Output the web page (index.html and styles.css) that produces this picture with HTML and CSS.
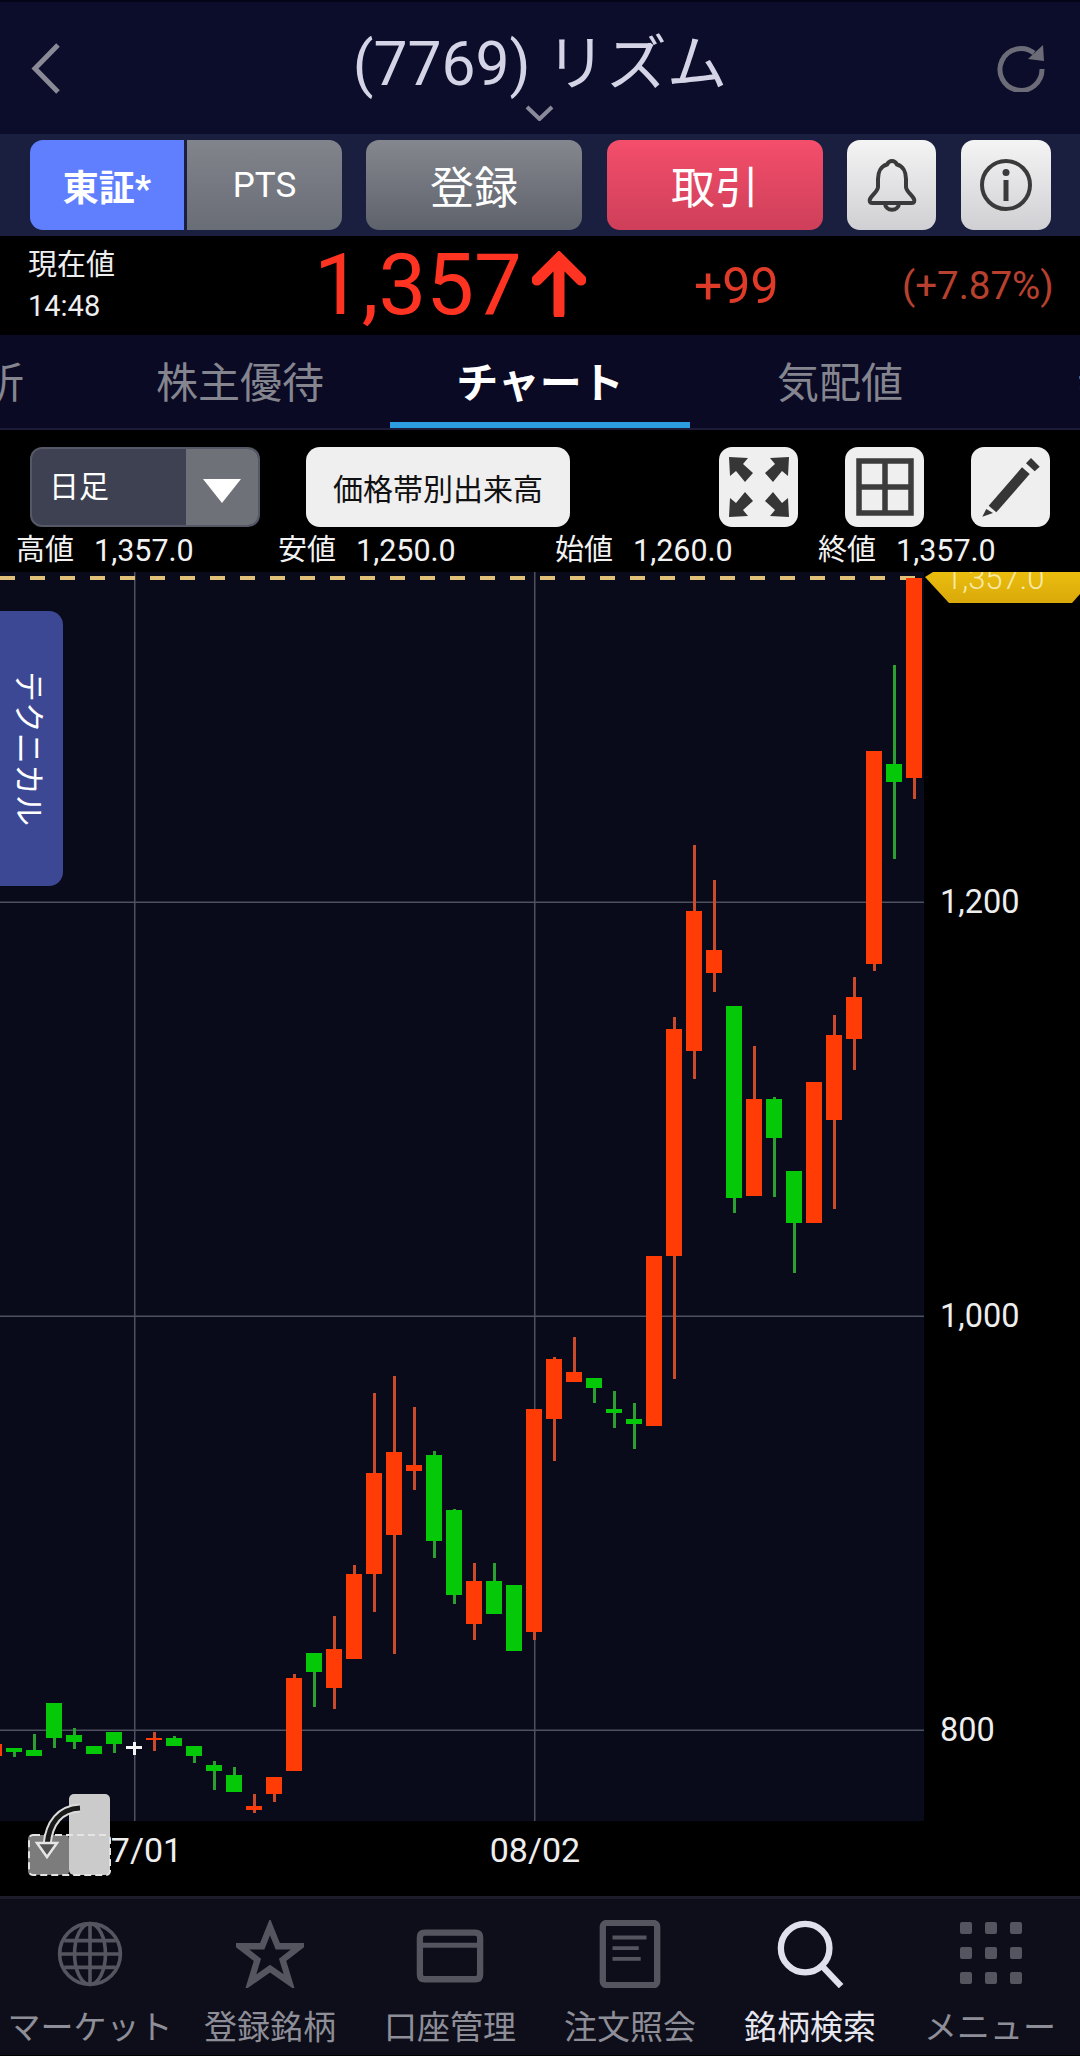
FILE: index.html
```html
<!DOCTYPE html>
<html lang="ja">
<head>
    <meta charset="UTF-8">
    <title>(7769) リズム</title>
    <link rel="stylesheet" href="styles.css">
</head>
<body>
    <header class="header">
        <svg class="back" viewBox="0 0 31 51"><path d="M27 2 L4 25.500 L27 49"/></svg>
        <h1 class="title">(7769) リズム</h1>
        <svg class="reload" viewBox="0 0 50 48"><path class="arc" d="M38 9 A21 21 0 1 0 46 25"/><path class="head" d="M47 1 L48 17 L32 15 Z"/></svg>
        <svg class="more" viewBox="0 0 29 16"><path d="M2 2 L14.500 14 L27 2"/></svg>
    </header>

    <div class="actions">
        <div class="market">
            <button class="market-on">東証*</button>
            <button class="market-off">PTS</button>
        </div>
        <button class="btn-wide btn-grey">登録</button>
        <button class="btn-wide btn-red">取引</button>
        <button class="btn-icon">
            <svg viewBox="0 0 54 56"><path class="line" d="M27 4 C30 4 31 5.500 32 7.500 C38 9 41 15 41 22 L41 30 C41 34 47 38 49 42 C50 44 49 46 47 46 L7 46 C5 46 4 44 5 42 C7 38 13 34 13 30 L13 22 C13 15 16 9 22 7.500 C23 5.500 24 4 27 4 Z"/><path class="line" d="M20 46 C20 55 34 55 34 46"/></svg>
        </button>
        <button class="btn-icon btn-last">
            <svg viewBox="0 0 54 56"><circle class="line" cx="27" cy="28" r="24"/><circle class="dot" cx="27" cy="15.500" r="3.500"/><rect class="dot" x="24.500" y="23" width="5" height="21"/></svg>
        </button>
    </div>

    <div class="quote">
        <div class="quote-label">
            <span>現在値</span>
            <span>14:48</span>
        </div>
        <div class="quote-price">
            <span>1,357</span>
            <svg viewBox="0 0 54 66"><path d="M27 7 L27 63 M5 29 L27 7 L49 29"/></svg>
        </div>
        <div class="quote-diff">+99</div>
        <div class="quote-rate">(+7.87%)</div>
    </div>

    <nav class="tabs">
        <a class="tab">企業分析</a>
        <a class="tab">株主優待</a>
        <a class="tab tab-on">チャート</a>
        <a class="tab">気配値</a>
        <a class="tab">歩み値</a>
    </nav>

    <div class="controls">
        <div class="select">
            <span class="select-text">日足</span>
            <span class="select-arrow"></span>
        </div>
        <button class="btn-volume">価格帯別出来高</button>
        <div class="tools">
            <button class="tool">
                <svg viewBox="0 0 60 60"><path d="M0 0 L19 1 L14 7 L24 16 L16 25 L7 14 L1 19 Z"/><path d="M60 0 L41 1 L46 7 L36 16 L44 25 L53 14 L59 19 Z"/><path d="M0 60 L19 59 L14 53 L24 44 L16 35 L7 46 L1 41 Z"/><path d="M60 60 L41 59 L46 53 L36 44 L44 35 L53 46 L59 41 Z"/></svg>
            </button>
            <button class="tool">
                <svg viewBox="0 0 60 60"><path class="panes" d="M4 4 H56 V56 H4 Z M30 4 V56 M4 30 H56"/></svg>
            </button>
            <button class="tool">
                <svg viewBox="0 0 60 60"><path d="M7.700 48.700 L15.300 55.300 L48.700 17 L41 10.300 Z"/><path d="M45 6.300 L50 1 L58.700 9.700 L53.700 14.300 Z"/><path d="M5.300 52 L12 56 L1.300 59.700 Z"/></svg>
            </button>
        </div>
    </div>

    <div class="stats">
        <div class="stat"><span>高値</span><span class="stat-value">1,357.0</span></div>
        <div class="stat"><span>安値</span><span class="stat-value">1,250.0</span></div>
        <div class="stat"><span>始値</span><span class="stat-value">1,260.0</span></div>
        <div class="stat"><span>終値</span><span class="stat-value">1,357.0</span></div>
    </div>

    <main class="chart">
        <svg class="plot" viewBox="0 572 924 1249">
            <!-- grid -->
            <rect class="grid" x="134" y="572" width="1.500" height="1249"/>
            <rect class="grid" x="534" y="572" width="1.500" height="1249"/>
            <rect class="grid" x="0" y="901.500" width="924" height="1.500"/>
            <rect class="grid" x="0" y="1315.500" width="924" height="1.500"/>
            <rect class="grid" x="0" y="1729.500" width="924" height="1.500"/>
            <path class="last" d="M0 578 H915"/>

            <!-- wicks -->
            <g class="wick-green">
                <rect x="13" y="1748" width="3" height="9"/>
                <rect x="33" y="1734" width="3" height="22"/>
                <rect x="53" y="1703" width="3" height="45"/>
                <rect x="73" y="1728" width="3" height="21"/>
                <rect x="113" y="1732" width="3" height="21"/>
                <rect x="173" y="1736" width="3" height="10"/>
                <rect x="193" y="1746" width="3" height="17"/>
                <rect x="213" y="1761" width="3" height="29"/>
                <rect x="233" y="1767" width="3" height="25"/>
                <rect x="313" y="1653" width="3" height="54"/>
                <rect x="433" y="1451" width="3" height="107"/>
                <rect x="453" y="1509" width="3" height="95"/>
                <rect x="493" y="1563" width="3" height="51"/>
                <rect x="593" y="1378" width="3" height="25"/>
                <rect x="613" y="1391" width="3" height="37"/>
                <rect x="633" y="1403" width="3" height="46"/>
                <rect x="733" y="1006" width="3" height="207"/>
                <rect x="773" y="1097" width="3" height="100"/>
                <rect x="793" y="1171" width="3" height="102"/>
                <rect x="893" y="665" width="3" height="194"/>
            </g>
            <g class="wick-red">
                <rect x="153" y="1732" width="3" height="19"/>
                <rect x="253" y="1794" width="3" height="19"/>
                <rect x="273" y="1777" width="3" height="25"/>
                <rect x="293" y="1674" width="3" height="10"/>
                <rect x="333" y="1616" width="3" height="93"/>
                <rect x="353" y="1565" width="3" height="20"/>
                <rect x="373" y="1393" width="3" height="219"/>
                <rect x="393" y="1376" width="3" height="278"/>
                <rect x="413" y="1407" width="3" height="83"/>
                <rect x="473" y="1563" width="3" height="77"/>
                <rect x="533" y="1409" width="3" height="231"/>
                <rect x="553" y="1357" width="3" height="104"/>
                <rect x="573" y="1337" width="3" height="45"/>
                <rect x="673" y="1017" width="3" height="362"/>
                <rect x="693" y="845" width="3" height="234"/>
                <rect x="713" y="880" width="3" height="112"/>
                <rect x="753" y="1046" width="3" height="150"/>
                <rect x="833" y="1015" width="3" height="194"/>
                <rect x="853" y="977" width="3" height="93"/>
                <rect x="873" y="751" width="3" height="220"/>
                <rect x="913" y="578" width="3" height="221"/>
            </g>
            <g class="wick-white">
                <rect x="133" y="1742" width="3" height="13"/>
                <rect x="126" y="1746" width="16" height="3"/>
            </g>

            <!-- bodies -->
            <g class="body-green">
                <rect x="6" y="1748" width="16" height="4"/>
                <rect x="26" y="1750" width="16" height="6"/>
                <rect x="46" y="1703" width="16" height="35"/>
                <rect x="66" y="1735" width="16" height="7"/>
                <rect x="86" y="1746" width="16" height="8"/>
                <rect x="106" y="1732" width="16" height="12"/>
                <rect x="166" y="1738" width="16" height="8"/>
                <rect x="186" y="1746" width="16" height="10"/>
                <rect x="206" y="1765" width="16" height="6"/>
                <rect x="226" y="1775" width="16" height="17"/>
                <rect x="306" y="1653" width="16" height="19"/>
                <rect x="426" y="1455" width="16" height="86"/>
                <rect x="446" y="1510" width="16" height="85"/>
                <rect x="486" y="1581" width="16" height="33"/>
                <rect x="506" y="1585" width="16" height="66"/>
                <rect x="586" y="1378" width="16" height="10"/>
                <rect x="606" y="1409" width="16" height="4"/>
                <rect x="626" y="1419" width="16" height="5"/>
                <rect x="726" y="1006" width="16" height="192"/>
                <rect x="766" y="1099" width="16" height="39"/>
                <rect x="786" y="1171" width="16" height="52"/>
                <rect x="886" y="764" width="16" height="18"/>
            </g>
            <g class="body-red">
                <rect x="-14" y="1744" width="16" height="12"/>
                <rect x="146" y="1738" width="16" height="2"/>
                <rect x="246" y="1806" width="16" height="4"/>
                <rect x="266" y="1777" width="16" height="17"/>
                <rect x="286" y="1678" width="16" height="93"/>
                <rect x="326" y="1649" width="16" height="39"/>
                <rect x="346" y="1574" width="16" height="85"/>
                <rect x="366" y="1473" width="16" height="101"/>
                <rect x="386" y="1452" width="16" height="83"/>
                <rect x="406" y="1465" width="16" height="6"/>
                <rect x="466" y="1581" width="16" height="43"/>
                <rect x="526" y="1409" width="16" height="223"/>
                <rect x="546" y="1359" width="16" height="60"/>
                <rect x="566" y="1372" width="16" height="10"/>
                <rect x="646" y="1256" width="16" height="170"/>
                <rect x="666" y="1029" width="16" height="227"/>
                <rect x="686" y="911" width="16" height="140"/>
                <rect x="706" y="950" width="16" height="23"/>
                <rect x="746" y="1099" width="16" height="97"/>
                <rect x="806" y="1082" width="16" height="141"/>
                <rect x="826" y="1035" width="16" height="85"/>
                <rect x="846" y="997" width="16" height="42"/>
                <rect x="866" y="751" width="16" height="213"/>
                <rect x="906" y="578" width="16" height="200"/>
            </g>
        </svg>

        <div class="technical">テクニカル</div>
        <div class="price-tag">1,357.0</div>
        <span class="axis-price axis-1200">1,200</span>
        <span class="axis-price axis-1000">1,000</span>
        <span class="axis-price axis-800">800</span>
    </main>

    <div class="dates">
        <span class="date date-july">07/01</span>
        <span class="date date-august">08/02</span>
        <svg class="rotate" viewBox="0 0 84 84">
            <rect class="rotate-page" x="41" y="1" width="41" height="81" rx="5"/>
            <rect class="rotate-shade" x="0" y="42" width="41" height="40" rx="4"/>
            <rect class="rotate-dash" x="1" y="42" width="81" height="40" rx="4"/>
            <path class="rotate-edge" d="M52 15 C32 16 21 30 19 52"/>
            <path class="rotate-curve" d="M52 15 C32 16 21 30 19 52"/>
            <path class="rotate-head" d="M9 50 L29 50 L19 64 Z"/>
        </svg>
    </div>

    <footer class="bottom">
        <a class="bottom-item">
            <svg viewBox="0 0 66 66"><g class="nav-thin"><circle cx="33" cy="33" r="29.500"/><ellipse cx="33" cy="33" rx="15" ry="29.500"/><path d="M33 3 V63 M4 33 H62 M8 20 H58 M8 46 H58"/></g></svg>
            <span>マーケット</span>
        </a>
        <a class="bottom-item">
            <svg viewBox="0 0 70 66"><path class="nav-line" d="M35 5 L43 25 L66 25 L48 39 L55 62 L35 48 L15 62 L22 39 L4 25 L27 25 Z"/></svg>
            <span>登録銘柄</span>
        </a>
        <a class="bottom-item">
            <svg viewBox="0 0 70 66"><path class="nav-line" d="M9 11 H61 Q66 11 66 16 V54 Q66 59 61 59 H9 Q4 59 4 54 V16 Q4 11 9 11 Z"/><path class="nav-band" d="M4 24 H66"/></svg>
            <span>口座管理</span>
        </a>
        <a class="bottom-item">
            <svg viewBox="0 0 66 70"><rect class="nav-line" x="5" y="3" width="56" height="64" rx="4"/><path class="nav-text" d="M15 18 H50 M15 29 H42 M15 40 H44"/></svg>
            <span>注文照会</span>
        </a>
        <a class="bottom-item bottom-on">
            <svg viewBox="0 0 70 70"><circle class="nav-line" cx="30" cy="29" r="25"/><path class="nav-line" d="M47 47 L67 68"/></svg>
            <span>銘柄検索</span>
        </a>
        <a class="bottom-item">
            <div class="dots">
                <i></i><i></i><i></i>
                <i></i><i></i><i></i>
                <i></i><i></i><i></i>
            </div>
            <span>メニュー</span>
        </a>
    </footer>
</body>
</html>
```

FILE: styles.css
```css
* {
    box-sizing: border-box;
}

body {
    margin: 0;
    width: 1080px;
    height: 2056px;
    overflow: hidden;
    background-color: #000;
    color: #fff;
    font-family: Roboto, "Noto Sans CJK JP", sans-serif;
}

button {
    border: none;
    padding: 0;
    font-family: inherit;
    color: #fff;
}

svg {
    display: block;
}

/* header */
.header {
    position: relative;
    height: 134px;
    display: flex;
    align-items: center;
    justify-content: space-between;
    padding: 0 34px 0 31px;
    background-color: #0c0d2b;
    border-top: 2px solid #050518;
}

.title {
    margin: 0;
    font-size: 60.500px;
    font-weight: 400;
    color: #d4d4e6;
    position: absolute;
    left: 0;
    right: 0;
    top: 21px;
    line-height: 84px;
    text-align: center;
}

.back {
    width: 31px;
    height: 51px;
    fill: none;
    stroke: #8a8a96;
    stroke-width: 5;
}

.reload {
    width: 50px;
    height: 48px;
    fill: none;
    stroke: #6c6c78;
}

.reload .arc {
    stroke-width: 5;
}

.reload .head {
    fill: #6c6c78;
    stroke: none;
}

.more {
    position: absolute;
    left: 525px;
    top: 103px;
    width: 29px;
    height: 16px;
    fill: none;
    stroke: #8a8a9a;
    stroke-width: 4;
}

/* action buttons */
.actions {
    height: 102px;
    display: flex;
    align-items: center;
    padding-left: 30px;
    background-color: #1a1f3f;
}

.market {
    width: 312px;
    height: 90px;
    display: flex;
    gap: 3px;
}

.market button {
    height: 90px;
}

.market-on {
    width: 154px;
    border-radius: 13px 0 0 13px;
    background-color: #5f7fff;
    font-size: 36px;
    font-weight: 700;
}

.market-off {
    flex: 1;
    border-radius: 0 13px 13px 0;
    background: linear-gradient(#82848c, #696d75);
    font-size: 35px;
}

.btn-wide {
    width: 216px;
    height: 90px;
    margin-left: 24px;
    border-radius: 13px;
    font-size: 44px;
}

.btn-grey {
    background: linear-gradient(#85878e, #5e626b);
}

.btn-red {
    margin-left: 25px;
    background: linear-gradient(#f44e6b, #ce3f59);
}

.btn-icon {
    width: 89px;
    height: 90px;
    margin-left: 24px;
    border-radius: 13px;
    background: linear-gradient(#f4f4f4, #d0d0d4);
    display: flex;
    align-items: center;
    justify-content: center;
}

.btn-last {
    margin-left: 25px;
    width: 90px;
}

.btn-icon svg {
    width: 54px;
    height: 56px;
}

.btn-icon .line {
    fill: none;
    stroke: #3a3a3a;
    stroke-width: 4;
}

.btn-icon .dot {
    fill: #3a3a3a;
}

/* current price */
.quote {
    height: 99px;
    display: grid;
    grid-template-columns: 314px 380px 208px 1fr;
    align-items: center;
}

.quote-label {
    padding-left: 28px;
    display: flex;
    flex-direction: column;
    gap: 2px;
    font-size: 29px;
    line-height: 39px;
    color: #eee;
}

.quote-price {
    display: flex;
    align-items: center;
    gap: 10px;
    font-size: 85px;
    line-height: 99px;
    font-weight: 400;
    color: #ff3322;
}

.quote-price svg {
    width: 54px;
    height: 66px;
    margin-top: -4px;
    fill: none;
    stroke: #ff3322;
    stroke-width: 11;
    stroke-linecap: round;
}

.quote-diff {
    font-size: 50px;
    color: #e03a28;
}

.quote-rate {
    font-size: 38.500px;
    font-weight: 400;
    color: #b8402f;
}

/* tabs */
.tabs {
    height: 95px;
    display: flex;
    margin-left: -210px;
    background-color: #0a0a24;
    border-bottom: 2px solid #1c1c38;
}

.tab {
    flex: 0 0 300px;
    height: 93px;
    padding-top: 21px;
    text-align: center;
    font-size: 42px;
    line-height: 56px;
    color: #85858f;
}

.tab-on {
    color: #fff;
    font-weight: 700;
    border-bottom: 6px solid #2b9de0;
}

/* chart controls */
.controls {
    height: 97px;
    display: flex;
    align-items: flex-end;
    padding: 0 30px;
}

.select {
    width: 230px;
    height: 80px;
    display: flex;
    border: 2px solid #555866;
    border-radius: 12px;
    overflow: hidden;
    background-color: #3e4151;
}

.select-text {
    flex: 1;
    padding-left: 17px;
    font-size: 30px;
    line-height: 76px;
}

.select-arrow {
    width: 72px;
    background-color: #6e7178;
    position: relative;
}

.select-arrow::after {
    content: "";
    position: absolute;
    left: 17px;
    top: 30px;
    border-left: 19px solid transparent;
    border-right: 19px solid transparent;
    border-top: 24px solid #fff;
}

.btn-volume {
    width: 264px;
    height: 80px;
    margin-left: 46px;
    border-radius: 14px;
    background-color: #efefef;
    color: #111;
    font-size: 30px;
}

.tools {
    margin-left: auto;
    display: flex;
    gap: 47px;
}

.tool {
    width: 79px;
    height: 80px;
    border-radius: 13px;
    background-color: #efefef;
    display: flex;
    align-items: center;
    justify-content: center;
}

.tool svg {
    width: 60px;
    height: 60px;
    flex: none;
    fill: #363636;
}

.tool .panes {
    fill: none;
    stroke: #3c3c3c;
    stroke-width: 5.500;
}

/* OHLC row */
.stats {
    height: 45px;
    display: grid;
    grid-template-columns: 262px 277px 263px 1fr;
    padding: 2px 0 0 16px;
    align-items: center;
}

.stat {
    display: flex;
    gap: 20px;
    font-size: 29px;
    line-height: 43px;
    color: #f2f2f2;
}

.stat-value {
    font-size: 30.500px;
}

/* chart */
.chart {
    position: relative;
    height: 1249px;
    overflow: hidden;
}

.plot {
    width: 924px;
    height: 1249px;
    background-color: #090b1b;
}

.grid {
    fill: #4e515f;
}

.last {
    fill: none;
    stroke: #e0c078;
    stroke-width: 4;
    stroke-dasharray: 15 15;
}

.wick-green {
    fill: #2c9f32;
}

.wick-red {
    fill: #cc4a2c;
}

.wick-white {
    fill: #f4f4f4;
}

.body-green {
    fill: #05c908;
}

.body-red {
    fill: #ff3c06;
}

.technical {
    position: absolute;
    left: 0;
    top: 39px;
    width: 63px;
    height: 275px;
    border-radius: 0 14px 14px 0;
    background-color: #3d4894;
    writing-mode: vertical-rl;
    text-orientation: sideways;
    display: flex;
    align-items: center;
    justify-content: center;
    font-size: 31px;
}

.price-tag {
    position: absolute;
    left: 925px;
    top: 0;
    width: 155px;
    height: 31px;
    padding-left: 20px;
    background: linear-gradient(#ebbd0e, #d9a90a);
    clip-path: polygon(8px 0, 100% 0, 100% 22px, 147px 31px, 24px 31px, 0 5px);
    font-size: 31px;
    font-weight: 300;
    line-height: 13px;
    color: #f8eaa8;
}

.axis-price {
    position: absolute;
    left: 940px;
    font-size: 32.500px;
    line-height: 40px;
    color: #eee;
}

.axis-1200 {
    top: 310px;
}

.axis-1000 {
    top: 724px;
}

.axis-800 {
    top: 1138px;
}

/* date axis */
.dates {
    position: relative;
    height: 75px;
}

.date {
    position: absolute;
    top: 9px;
    font-size: 34px;
    line-height: 40px;
    color: #eee;
    transform: translateX(-50%);
}

.date-july {
    left: 137px;
}

.date-august {
    left: 535px;
}

.rotate {
    position: absolute;
    left: 28px;
    top: -28px;
    width: 84px;
    height: 84px;
}

.rotate-page {
    fill: #cbcbcb;
}

.rotate-shade {
    fill: #7c7c7c;
}

.rotate-dash {
    fill: none;
    stroke: #e4e4e4;
    stroke-width: 2;
    stroke-dasharray: 7 4;
}

.rotate-edge {
    fill: none;
    stroke: #dcdcdc;
    stroke-width: 9;
}

.rotate-curve {
    fill: none;
    stroke: #1a1a1a;
    stroke-width: 5;
}

.rotate-head {
    fill: #555;
    stroke: #e6e6e6;
    stroke-width: 2.500;
}

/* bottom nav */
.bottom {
    height: 159px;
    display: grid;
    grid-template-columns: repeat(6, 180px);
    background-color: #0e0e1a;
    border-top: 3px solid #1c1c2a;
}

.bottom-item {
    position: relative;
    text-align: center;
    color: #8e8e98;
    font-size: 33px;
    line-height: 44px;
}

.bottom-item span {
    position: absolute;
    left: -10px;
    right: -10px;
    top: 107px;
}

.bottom-item svg {
    position: absolute;
    left: 56px;
    top: 21px;
    width: 68px;
    height: 68px;
}

.nav-thin {
    fill: none;
    stroke: #55555f;
    stroke-width: 3.500;
}

.nav-line {
    fill: none;
    stroke: #55555f;
    stroke-width: 6.500;
}

.nav-band {
    fill: none;
    stroke: #55555f;
    stroke-width: 5;
}

.nav-text {
    fill: none;
    stroke: #55555f;
    stroke-width: 4;
}

.bottom-on {
    color: #e6e6ee;
}

.bottom-on .nav-line {
    stroke: #e0e0ec;
}

.dots {
    position: absolute;
    left: 60px;
    top: 23px;
    display: grid;
    grid-template-columns: repeat(3, 12px);
    grid-auto-rows: 12px;
    column-gap: 13px;
    row-gap: 13px;
}

.dots i {
    border-radius: 2px;
    background-color: #55555f;
}
```
